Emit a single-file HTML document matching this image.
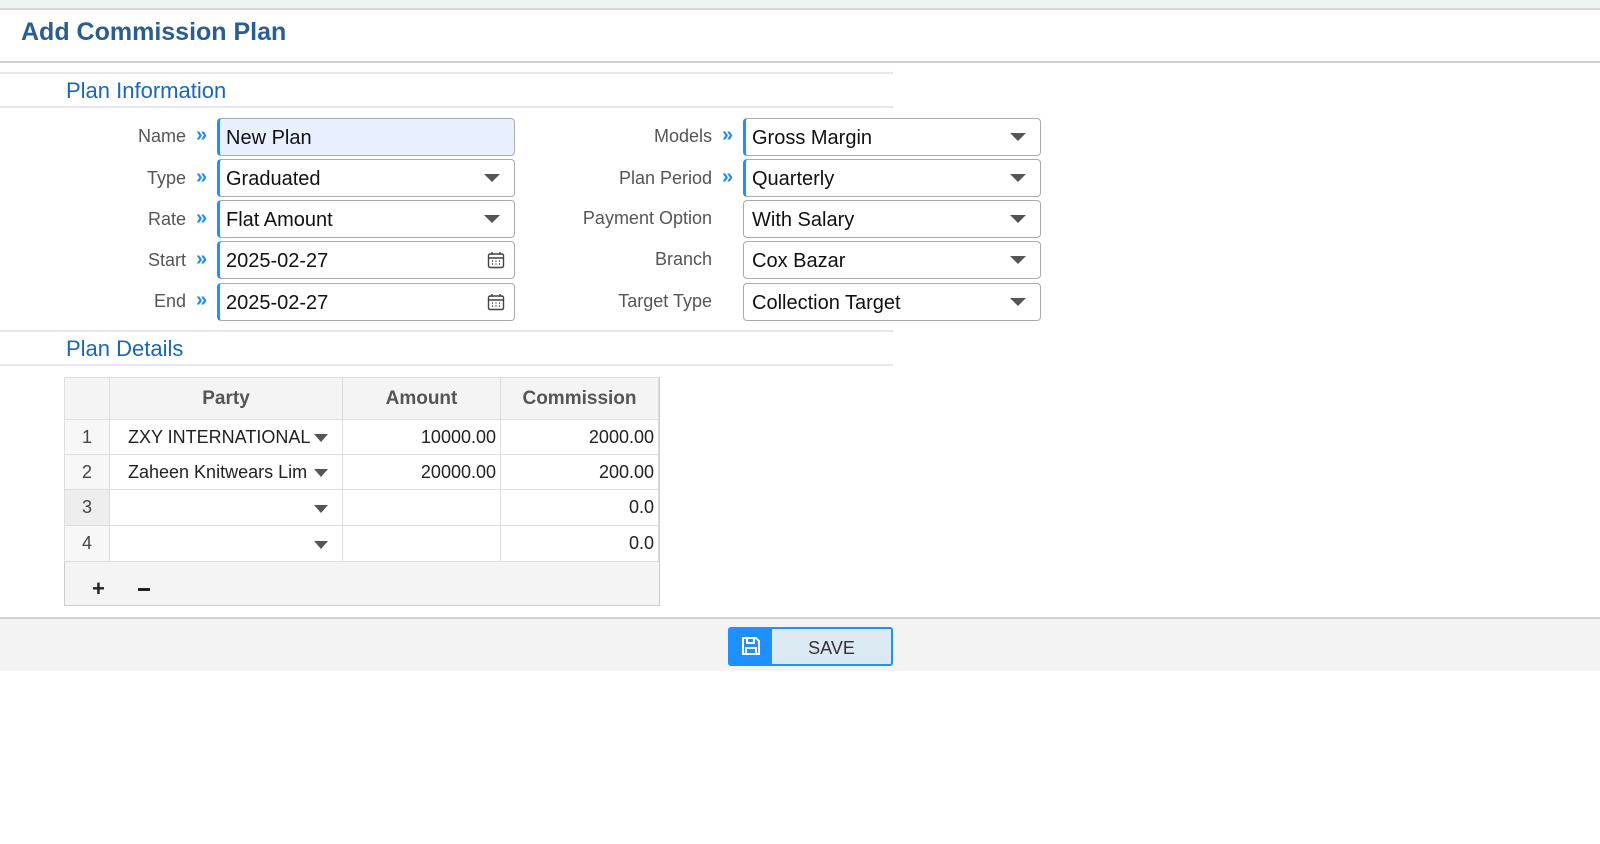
<!DOCTYPE html>
<html><head><style>
*{box-sizing:border-box;margin:0;padding:0}
body{width:1600px;height:844px;background:#fff;font-family:"Liberation Sans","DejaVu Sans",sans-serif;position:relative;overflow:hidden}
.a{position:absolute}
.lbl{position:absolute;font-size:18px;color:#555;text-align:right;width:200px}
.req{position:absolute;color:#1a8cff;font-size:20px;font-weight:bold}
.box{position:absolute;height:38px;border:1px solid #aaa;border-radius:4px;background:#fff;font-size:20px;color:#111;padding:8px 0 0 8px}
.box.r{border-left:3px solid #1e90ff;padding-left:6px}
.arr{position:absolute;right:14px;top:14px;width:0;height:0;border-left:8px solid transparent;border-right:8px solid transparent;border-top:8px solid #555}
.sec{position:absolute;left:66px;font-size:22px;color:#1766c2}
.hl{position:absolute;left:0;width:893px;height:2px;background:#e6e6f2}
table{border-collapse:collapse;font-size:18px;color:#222}
td{border:1px solid #ddd;height:35px;padding:0 4px}
</style></head><body>
<div class="a" style="left:0;top:0;width:1600px;height:10px;background:#eef4f4;border-bottom:2px solid #d6d6d6"></div>
<div class="a" style="left:21px;top:18px;font-size:25px;font-weight:bold;color:#2a5d93">Add Commission Plan</div>
<div class="a" style="left:0;top:61px;width:1600px;height:2px;background:#cfcfcf"></div>
<div class="hl" style="top:72px"></div>
<div class="sec" style="top:78px">Plan Information</div>
<div class="hl" style="top:106px"></div>

<div class="lbl" style="left:-14px;top:126px">Name</div><div class="req" style="left:196px;top:124px">»</div>
<div class="box r" style="left:217px;top:118px;width:298px;background:#e6f0fe">New Plan</div>
<div class="lbl" style="left:-14px;top:168px">Type</div><div class="req" style="left:196px;top:166px">»</div>
<div class="box r" style="left:217px;top:159px;width:298px">Graduated<div class="arr"></div></div>
<div class="lbl" style="left:-14px;top:209px">Rate</div><div class="req" style="left:196px;top:207px">»</div>
<div class="box r" style="left:217px;top:200px;width:298px">Flat Amount<div class="arr"></div></div>
<div class="lbl" style="left:-14px;top:250px">Start</div><div class="req" style="left:196px;top:248px">»</div>
<div class="box r" style="left:217px;top:241px;width:298px">2025-02-27<svg class="a" style="right:9px;top:9px" width="18" height="18" viewBox="0 0 18 18" fill="none" stroke="#444" stroke-width="1.4"><rect x="1.5" y="3" width="15" height="13.5" rx="1.5"/><path d="M1.5 7h15M5 1v3M13 1v3M5 10h1M8.5 10h1M12 10h1M5 13h1M8.5 13h1M12 13h1"/></svg></div>
<div class="lbl" style="left:-14px;top:291px">End</div><div class="req" style="left:196px;top:289px">»</div>
<div class="box r" style="left:217px;top:283px;width:298px">2025-02-27<svg class="a" style="right:9px;top:9px" width="18" height="18" viewBox="0 0 18 18" fill="none" stroke="#444" stroke-width="1.4"><rect x="1.5" y="3" width="15" height="13.5" rx="1.5"/><path d="M1.5 7h15M5 1v3M13 1v3M5 10h1M8.5 10h1M12 10h1M5 13h1M8.5 13h1M12 13h1"/></svg></div>

<div class="lbl" style="left:512px;top:126px">Models</div><div class="req" style="left:722px;top:124px">»</div>
<div class="box r" style="left:743px;top:118px;width:298px">Gross Margin<div class="arr"></div></div>
<div class="lbl" style="left:512px;top:168px">Plan Period</div><div class="req" style="left:722px;top:166px">»</div>
<div class="box r" style="left:743px;top:159px;width:298px">Quarterly<div class="arr"></div></div>
<div class="lbl" style="left:512px;top:208px">Payment Option</div>
<div class="box" style="left:743px;top:200px;width:298px">With Salary<div class="arr"></div></div>
<div class="lbl" style="left:512px;top:249px">Branch</div>
<div class="box" style="left:743px;top:241px;width:298px">Cox Bazar<div class="arr"></div></div>
<div class="lbl" style="left:512px;top:291px">Target Type</div>
<div class="box" style="left:743px;top:283px;width:298px">Collection Target<div class="arr"></div></div>

<div class="hl" style="top:330px"></div>
<div class="sec" style="top:336px">Plan Details</div>
<div class="hl" style="top:364px"></div>

<div class="a" style="left:64px;top:377px;width:596px;height:229px;border:1px solid #ccc;background:#f4f4f4"></div>
<table class="a" style="left:64px;top:377px;width:595px">
<tr style="background:#f4f4f4;color:#555;font-weight:bold;font-size:19px"><td style="width:45px;height:42px"></td><td style="width:233px;text-align:center">Party</td><td style="width:158px;text-align:center">Amount</td><td style="text-align:center">Commission</td></tr>
<tr style="background:#fff"><td style="background:#f7f7f7;text-align:center;color:#444">1</td><td style="padding-left:18px;position:relative">ZXY INTERNATIONAL<span class="arr" style="top:14px;right:14px;border-left-width:7px;border-right-width:7px"></span></td><td style="text-align:right">10000.00</td><td style="text-align:right">2000.00</td></tr>
<tr style="background:#fff"><td style="background:#f7f7f7;text-align:center;color:#444">2</td><td style="padding-left:18px;position:relative">Zaheen Knitwears Lim<span class="arr" style="top:14px;right:14px;border-left-width:7px;border-right-width:7px"></span></td><td style="text-align:right">20000.00</td><td style="text-align:right">200.00</td></tr>
<tr style="background:#fff"><td style="background:#eee;text-align:center;color:#444;height:36px">3</td><td style="position:relative"><span class="arr" style="top:15px;right:14px;border-left-width:7px;border-right-width:7px"></span></td><td></td><td style="text-align:right">0.0</td></tr>
<tr style="background:#fff"><td style="background:#f7f7f7;text-align:center;color:#444;height:36px">4</td><td style="position:relative"><span class="arr" style="top:15px;right:14px;border-left-width:7px;border-right-width:7px"></span></td><td></td><td style="text-align:right">0.0</td></tr>
</table>
<div class="a" style="left:92px;top:576px;font-size:22px;font-weight:bold;color:#222">+</div>
<div class="a" style="left:138px;top:588px;width:12px;height:3px;background:#222"></div>

<div class="a" style="left:0;top:617px;width:1600px;height:54px;background:#f3f3f3;border-top:2px solid #d0d0d0"></div>
<div class="a" style="left:728px;top:627px;width:165px;height:39px;border:2px solid #1e90ff;border-radius:3px;background:#dbe9f3;overflow:hidden">
<div class="a" style="left:0;top:0;width:42px;height:37px;background:#1e90ff"></div>
<svg class="a" style="left:11px;top:7px" width="20" height="20" viewBox="0 0 20 20" fill="none" stroke="#fff" stroke-width="2"><path d="M2 2h13l3 3v13H2z"/><path d="M6 2v5h7V2M5 18v-6h10v6"/></svg>
<div class="a" style="left:42px;top:9px;width:119px;text-align:center;font-size:18px;color:#333">SAVE</div>
</div>
</body></html>
